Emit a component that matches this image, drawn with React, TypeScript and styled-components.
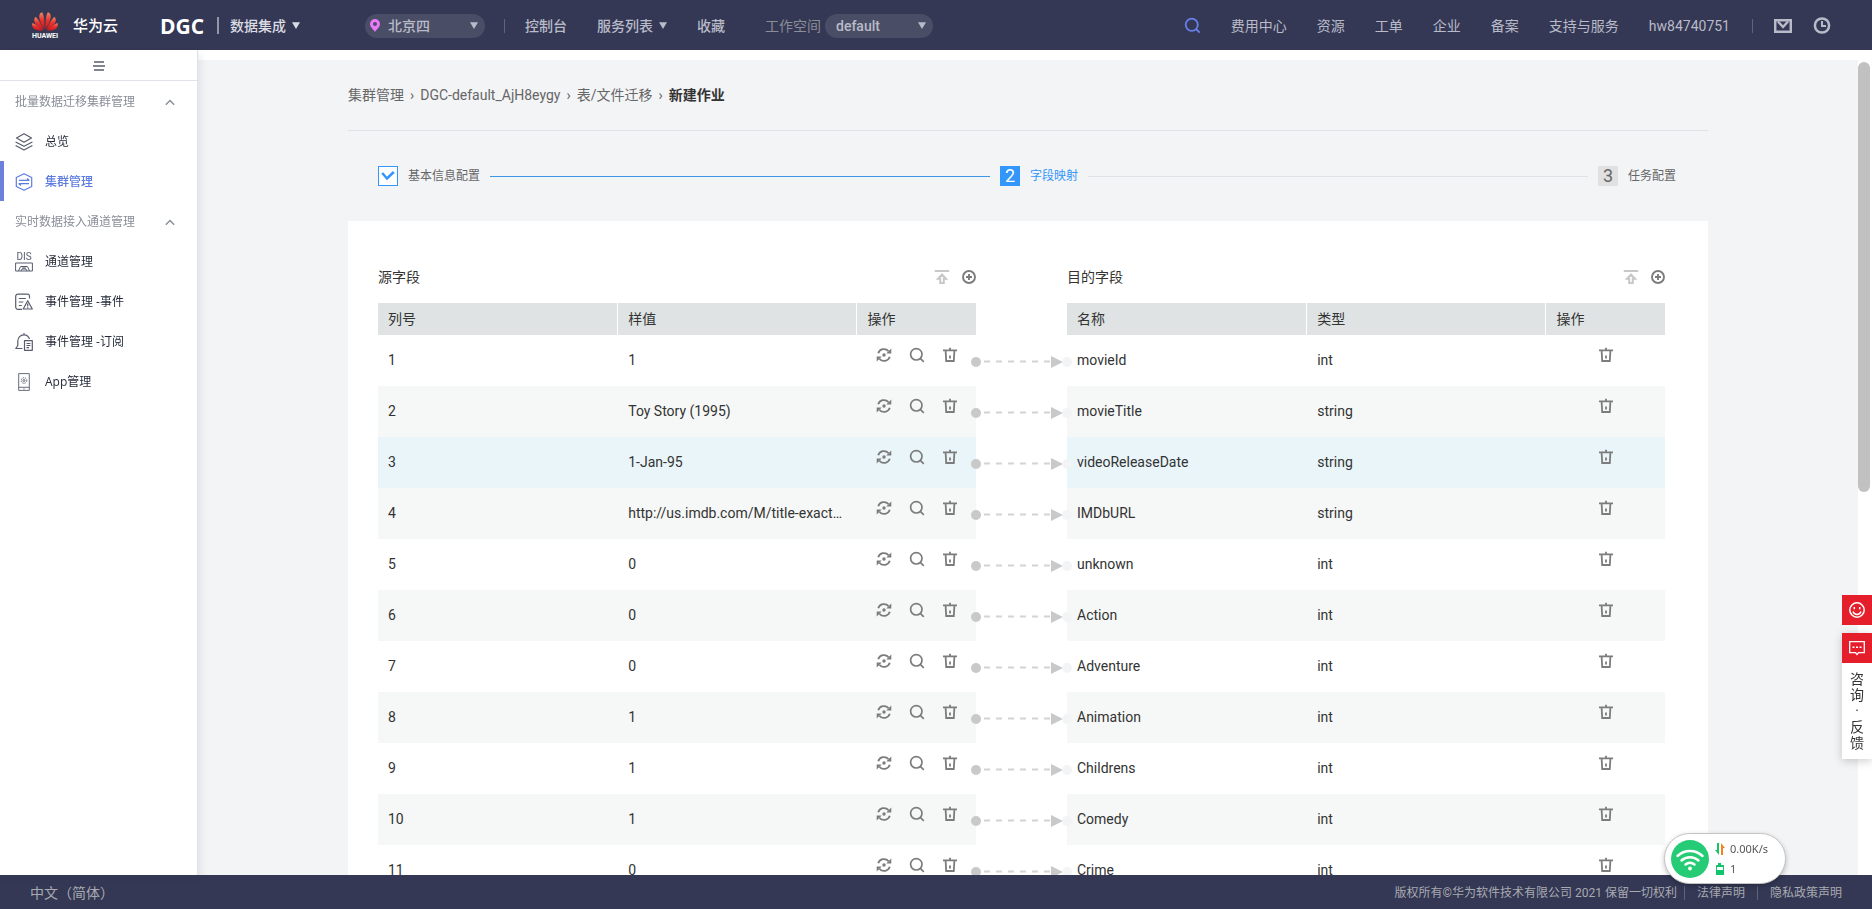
import React from "react";
import styled, { createGlobalStyle, css } from "styled-components";

const GlobalStyle = createGlobalStyle`
  *, *::before, *::after { box-sizing: border-box; }
  html, body { margin: 0; padding: 0; }
  body {
    font-family: Roboto, "Noto Sans CJK SC", sans-serif;
    font-size: 14px;
    line-height: 20px;
    color: #333;
    background: #fff;
  }
  button, select { font: inherit; color: inherit; }
  button { border: 0; padding: 0; background: none; cursor: pointer; }
  a { color: inherit; text-decoration: none; }
  svg { display: block; }
`;

const Page = styled.div`
  height: 100vh;
  display: flex;
  flex-direction: column;
  overflow: hidden;
`;

/* ---------- header ---------- */

const Header = styled.header`
  flex: none;
  height: 50px;
  padding: 1px 41px 0 32px;
  display: flex;
  align-items: center;
  background: #343855;
  color: #b9bbc8;
  white-space: nowrap;
`;

const Logo = styled.a`
  display: flex;
  flex-direction: column;
  align-items: center;
  width: 26px;
  margin-right: 15px;
  color: #fff;
  font-size: 7px;
  font-weight: 700;
  line-height: 8px;
`;

const Brand = styled.a`
  width: 46px;
  margin-right: 41px;
  color: #fff;
  font-size: 15px;
  font-weight: 500;
`;

const Product = styled.strong`
  width: 46px;
  margin-right: 11px;
  color: #fff;
  font-family: "Open Sans", "Noto Sans", sans-serif;
  font-size: 21px;
  font-weight: 700;
`;

const Divider = styled.span<{ $tall?: boolean }>`
  flex: none;
  width: ${(p) => (p.$tall ? 2 : 1)}px;
  height: ${(p) => (p.$tall ? 17 : 14)}px;
  background: ${(p) => (p.$tall ? "#9597a6" : "#5f6279")};
`;

const MenuButton = styled.button<{ $bright?: boolean }>`
  display: flex;
  align-items: center;
  gap: 6px;
  font-weight: 500;
  color: ${(p) => (p.$bright ? "#dcdce3" : "#b9bbc8")};
`;

const ProductMenu = styled(MenuButton)`
  margin: 0 65px 0 11px;
`;

const TopNav = styled.nav`
  display: flex;
  align-items: center;
  gap: 30px;
  margin-left: 20px;
  font-weight: 500;
`;

const Pill = styled.div<{ $width: number; $indent: number }>`
  position: relative;
  width: ${(p) => p.$width}px;
  height: 24px;
  border-radius: 12px;
  background: #4a4d66;
  display: flex;
  align-items: center;

  select {
    appearance: none;
    width: 100%;
    height: 24px;
    padding: 0 20px 0 ${(p) => p.$indent}px;
    border: 0;
    border-radius: 12px;
    background: transparent;
    font-weight: 500;
    outline: 0;
  }
  > svg { position: absolute; pointer-events: none; }
  > svg:last-child { right: 7px; }
  > svg:first-child { left: 5px; }
`;

const HeaderDivider = styled(Divider)`
  margin-left: 19px;
`;

const WorkspaceLabel = styled.label`
  margin-left: 40px;
  margin-right: 4px;
  color: #8c8d96;
`;

const UserNav = styled.nav`
  display: flex;
  align-items: center;
  gap: 30px;
  margin-left: auto;
`;

const Tools = styled.div`
  display: flex;
  align-items: center;
  gap: 21px;
  margin-left: 22px;
`;

/* ---------- body ---------- */

const Body = styled.div`
  flex: 1;
  min-height: 0;
  display: flex;
`;

const Sidebar = styled.aside`
  position: relative;
  z-index: 2;
  flex: none;
  width: 198px;
  background: #fff;
  border-right: 1px solid #dfe1e6;
  box-shadow: 2px 4px 8px rgba(40, 50, 80, 0.1);
  font-family: "Open Sans", "Noto Sans CJK SC", sans-serif;
  font-size: 12px;
`;

const Collapse = styled.button`
  display: flex;
  width: 100%;
  height: 31px;
  padding-top: 2px;
  align-items: center;
  justify-content: center;
  border-bottom: 1px solid #e1e2ee;
`;

const Group = styled.button`
  display: flex;
  width: 100%;
  height: 40px;
  align-items: center;
  justify-content: space-between;
  padding: 2px 22px 0 15px;
  color: #8a8e99;
`;

const Item = styled.a<{ $active?: boolean }>`
  display: flex;
  align-items: center;
  gap: 12px;
  height: 40px;
  padding: 2px 0 0 11px;
  border-left: 4px solid transparent;
  color: #252b3a;
  svg { flex: none; color: #575d6c; }
  ${(p) =>
    p.$active &&
    css`
      border-left-color: #6c80dc;
      color: #5e7ce0;
      font-weight: 500;
      svg { color: #5e7ce0; }
    `}
`;

const Main = styled.main`
  flex: 1;
  min-width: 0;
  display: flex;
  padding-top: 10px;
`;

const Scroller = styled.div`
  flex: 1;
  min-width: 0;
  overflow: auto;
  scrollbar-width: none;
  background: #f3f4f6;
`;

const Rail = styled.div`
  flex: none;
  width: 14px;
  padding: 2px 2px 2px 0;
`;

const Thumb = styled.div`
  height: 53%;
  border-radius: 6px;
  background: #c1c1c1;
`;

const Content = styled.div`
  max-width: 1360px;
  margin: 0 auto;
`;

const Crumbs = styled.nav`
  display: flex;
  align-items: center;
  gap: 6px;
  height: 71px;
  border-bottom: 1px solid #dfe1e4;
  color: #666;
  strong { color: #333; }
`;

const Steps = styled.ol`
  display: flex;
  align-items: center;
  gap: 10px;
  height: 90px;
  margin: 0;
  padding: 0 32px 0 30px;
  list-style: none;
  font-size: 12px;
`;

const Step = styled.li<{ $current?: boolean }>`
  display: flex;
  align-items: center;
  gap: 10px;
  color: ${(p) => (p.$current ? "#3296fa" : "#666")};
`;

const StepBox = styled.span<{ $kind: "done" | "current" | "todo" }>`
  display: flex;
  align-items: center;
  justify-content: center;
  width: 20px;
  height: 20px;
  font-size: 18px;
  ${(p) =>
    p.$kind === "done"
      ? "border: 1px solid #3296fa; background: #fff;"
      : p.$kind === "current"
        ? "background: #3296fa; color: #fff;"
        : "background: #e1e1e1; color: #666;"}
`;

const StepLine = styled.li<{ $done?: boolean }>`
  flex: 1;
  height: 1px;
  background: ${(p) => (p.$done ? "#3c96e6" : "#dfe1e4")};
`;

const Card = styled.section`
  display: flex;
  padding: 46px 43px 40px 30px;
  background: #fff;
`;

const Panel = styled.div`
  flex: 1;
  min-width: 0;
`;

const PanelHead = styled.div`
  display: flex;
  align-items: center;
  justify-content: space-between;
  height: 20px;
  margin-bottom: 16px;
  h2 { margin: 0; font-size: 14px; font-weight: 400; }
  div { display: flex; gap: 12px; }
`;

const Table = styled.table`
  width: 100%;
  table-layout: fixed;
  border-collapse: separate;
  border-spacing: 0;
  th {
    height: 32px;
    padding: 0 10px;
    background: #dfe3e4;
    font-weight: 400;
    text-align: left;
  }
  th + th { border-left: 1px solid #fff; }
  th:last-child { width: 20%; }
`;

const Row = styled.tr<{ $tone: string }>`
  background: ${(p) => p.$tone};
  td {
    height: 51px;
    padding: 0 10px 2px;
    overflow: hidden;
    text-overflow: ellipsis;
    white-space: nowrap;
  }
  td + td { padding-left: 11px; }
`;

const Actions = styled.div`
  display: flex;
  justify-content: center;
  gap: 17px;
  padding-bottom: 10px;
`;

const IconButton = styled.button`
  display: flex;
  color: #7c7c7c;
  &:disabled { color: #c8c8c8; }
`;

const SearchButton = styled(IconButton)`
  color: #6580e8;
`;

const Links = styled.div`
  position: relative;
  z-index: 1;
  flex: none;
  width: 91px;
  padding-top: 68px;
  svg { overflow: visible; }
`;

/* ---------- footer and floating widgets ---------- */

const Footer = styled.footer`
  flex: none;
  display: flex;
  align-items: center;
  justify-content: space-between;
  height: 34px;
  padding: 1px 30px 0;
  background: #343855;
  color: #a9aab0;
`;

const Legal = styled.div`
  display: flex;
  align-items: center;
  gap: 12px;
  font-size: 12px;
  span:first-child { margin-right: -5px; }
`;

const Feedback = styled.div`
  position: fixed;
  z-index: 3;
  right: 0;
  bottom: 150px;
  width: 30px;
  display: flex;
  flex-direction: column;
  gap: 8px;
`;

const RedButton = styled.button`
  display: flex;
  width: 30px;
  height: 30px;
  align-items: center;
  justify-content: center;
  background: #e41f2b;
`;

const FeedbackBox = styled.div`
  background: #fff;
  box-shadow: 0 2px 10px rgba(0, 0, 0, 0.2);
`;

const FeedbackText = styled.a`
  display: block;
  padding: 8px;
  line-height: 16px;
  text-align: center;
  word-break: break-all;
`;

const NetWidget = styled.div`
  position: fixed;
  z-index: 4;
  right: 86px;
  bottom: 25px;
  display: flex;
  align-items: center;
  gap: 6px;
  width: 122px;
  height: 51px;
  padding-left: 6px;
  border: 1px solid #c4c4c4;
  border-radius: 26px;
  background: #fff;
  box-shadow: 0 2px 5px rgba(0, 0, 0, 0.25);
  color: #555;
  font-family: "Noto Sans", sans-serif;
  font-size: 11px;
`;

const NetLine = styled.div`
  display: flex;
  align-items: center;
  gap: 5px;
`;

/* ---------- icons ---------- */

const Caret = () => (
  <svg width="8" height="7" viewBox="0 0 8 7" fill="currentColor"><path d="M0 .3h8L4 7z" /></svg>
);

const Petals = () => (
  <svg width="26" height="20" viewBox="0 0 26 20">
    <defs>
      <linearGradient id="petal" x1="0" y1="0" x2="0" y2="1">
        <stop offset="0" stopColor="#f08a68" />
        <stop offset="0.45" stopColor="#e8342c" />
        <stop offset="1" stopColor="#c9171e" />
      </linearGradient>
    </defs>
    <g fill="url(#petal)">
      <path d="M12.5 17.500C12.600 11 12.400 4 10.200.3 7.500 1 6.800 3.500 7.400 6.300c.7 3.700 3 7.800 5.100 11.200z" />
      <path d="M13.500 17.500C13.400 11 13.600 4 15.800.3c2.700.7 3.400 3.200 2.800 6-.7 3.700-3 7.800-5.100 11.200z" />
      <path d="M11.600 18.100C9.700 13.200 7 7.800 3.700 4.800 1.700 6.500 1.700 9 3.200 11.200c2 2.800 5.200 5 8.400 6.900z" />
      <path d="M14.400 18.100C16.300 13.200 19 7.800 22.300 4.800c2 1.700 2 4.200.5 6.400-2 2.800-5.200 5-8.400 6.900z" />
      <path d="M11 18.600C8.300 16 4 12.300.4 11c-.9 2.600.2 5 2.500 6.300 2.300 1.300 5.400 1.500 8.100 1.300z" />
      <path d="M15 18.600C17.700 16 22 12.300 25.600 11c.9 2.600-.2 5-2.500 6.300-2.300 1.300-5.400 1.500-8.100 1.300z" />
    </g>
  </svg>
);

const Stroke = ({ children }: { children: React.ReactNode }) => (
  <svg width="18" height="18" viewBox="0 0 18 18" fill="none" stroke="currentColor" strokeWidth="1.2" strokeLinejoin="round">
    {children}
  </svg>
);

const LayersIcon = () => (
  <Stroke>
    <path d="M9 .8 16.500 5 9 9.200 1.500 5zM.6 9 9 13.300 17.400 9M.6 12.500 9 17l8.400-4.500" />
  </Stroke>
);
const HexIcon = () => (
  <Stroke>
    <path d="M9 .7 16.700 4.500v9L9 17.300 1.300 13.500v-9zM4 7.300h10l-2-1.800M14 10.700H4l2 1.800" />
  </Stroke>
);
const DisIcon = () => (
  <svg width="18" height="20" viewBox="0 0 18 20" fill="none" stroke="currentColor">
    <text x="9" y="8" textAnchor="middle" fontSize="10" fontFamily="Roboto" fill="currentColor" stroke="none">DIS</text>
    <path d="M.6 11h16.800v8H.6zM3.500 19l2-4.500h7l2 4.500M6 19l1-2h4l1 2M8 14.500v2.500M10 14.500v2.500" />
  </svg>
);
const EventIcon = () => (
  <Stroke>
    <path d="M7 16.400H3A2.300 2.300 0 0 1 .7 14V3A2.300 2.300 0 0 1 3 1.200h9.500A2 2 0 0 1 14.500 3v2.500M3.800 5.500h7M3.800 9h4.500M3.800 12.500h3M12.700 7.700 17.300 16H8.200zM12.700 10.500v3M12.700 14.200v1" />
  </Stroke>
);
const BellIcon = () => (
  <Stroke>
    <path d="M7.500 15.500H.8l2-3V8A6 6 0 0 1 9 1.800 6 6 0 0 1 14.500 6M9 0v2M9.500 7.700h7.800v9.600H9.500zM11.500 10.500h4M11.500 12.500h4M11.500 14.700h2.500" />
  </Stroke>
);
const PhoneIcon = () => (
  <svg width="18" height="18" viewBox="0 0 18 18" fill="none" stroke="currentColor" strokeWidth=".9">
    <path d="M3.700.6h10.600v16.800H3.700zM3.700 14.300h10.600M8.400 16h1.200" />
    <circle cx="9" cy="7.500" r="2.800" strokeDasharray="1.500 .8" />
    <circle cx="9" cy="7.500" r="1" />
  </svg>
);
const ChevronUp = () => (
  <svg width="10" height="7" viewBox="0 0 10 7" fill="none" stroke="#8a8e99" strokeWidth="1.400"><path d="M.8 5.800 5 1.400l4.200 4.400" /></svg>
);
const RefreshIcon = () => (
  <svg width="16" height="16" viewBox="0 0 16 16" fill="none" stroke="currentColor" strokeWidth="1.800">
    <path d="M2.200 6.200A6 6 0 0 1 12.500 4.200M13.800 9.800A6 6 0 0 1 3.500 11.800" />
    <path d="M15.300 1.500v5h-5zM.7 14.500v-5h5z" fill="currentColor" stroke="none" />
    <circle cx="8" cy="8" r="1.700" fill="currentColor" stroke="none" />
  </svg>
);
const SearchIcon = ({ size = 16 }: { size?: number }) => (
  <svg width={size} height={size} viewBox="0 0 16 16" fill="none" stroke="currentColor" strokeWidth="1.700">
    <circle cx="7.300" cy="7.300" r="5.700" /><path d="m11.300 11.300 3.500 3.500" />
  </svg>
);
const TrashIcon = () => (
  <svg width="16" height="16" viewBox="0 0 16 16" fill="none" stroke="currentColor" strokeWidth="1.800">
    <path d="M1 3.300h14M3.600 3.500l.6 10.500h7.600l.6-10.500M8 .8v2.700" /><path d="M8 8.500v3" />
  </svg>
);
const TopIcon = () => (
  <svg width="16" height="16" viewBox="0 0 16 16" fill="none" stroke="currentColor" strokeWidth="2">
    <path d="M.8 2h14.400M8 5.500l4 4.200H9.800v4.300H6.200V9.700H4z" />
  </svg>
);
const PlusIcon = () => (
  <svg width="14" height="16" viewBox="0 0 14 16" fill="none" stroke="currentColor" strokeWidth="1.900">
    <circle cx="7" cy="8" r="6" /><path d="M7 5v6M4 8h6" />
  </svg>
);

/* ---------- data ---------- */

const fields = [
  ["1", "movieId", "int"],
  ["Toy Story (1995)", "movieTitle", "string"],
  ["1-Jan-95", "videoReleaseDate", "string"],
  ["http://us.imdb.com/M/title-exact?Toy%20Story%20(1995)", "IMDbURL", "string"],
  ["0", "unknown", "int"],
  ["0", "Action", "int"],
  ["0", "Adventure", "int"],
  ["1", "Animation", "int"],
  ["1", "Childrens", "int"],
  ["1", "Comedy", "int"],
  ["0", "Crime", "int"],
];
const hoveredRow = 2;
const rowTone = (i: number) => (i === hoveredRow ? "#e9f5f9" : i % 2 ? "#f6f8f7" : "#fff");

const userLinks = ["费用中心", "资源", "工单", "企业", "备案", "支持与服务", "hw84740751"];

const PanelTitle = ({ text }: { text: string }) => (
  <PanelHead>
    <h2>{text}</h2>
    <div>
      <IconButton disabled aria-label="置顶"><TopIcon /></IconButton>
      <IconButton aria-label="添加"><PlusIcon /></IconButton>
    </div>
  </PanelHead>
);

export default function App() {
  return (
    <Page>
      <GlobalStyle />
      <Header>
        <Logo href="#"><Petals />HUAWEI</Logo>
        <Brand href="#">华为云</Brand>
        <Product>DGC</Product>
        <Divider $tall />
        <ProductMenu $bright>数据集成<Caret /></ProductMenu>
        <Pill $width={120} $indent={23}>
          <svg width="10" height="13" viewBox="0 0 10 13"><path fill="#e879f9" fillRule="evenodd" d="M5 0a5 5 0 0 1 5 5c0 3-3.500 5.500-5 8C3.500 10.500 0 8 0 5a5 5 0 0 1 5-5zm0 3a2 2 0 1 0 0 4 2 2 0 0 0 0-4z" /></svg>
          <select aria-label="区域"><option>北京四</option></select>
          <Caret />
        </Pill>
        <HeaderDivider />
        <TopNav>
          <a href="#">控制台</a>
          <MenuButton>服务列表<Caret /></MenuButton>
          <a href="#">收藏</a>
        </TopNav>
        <WorkspaceLabel htmlFor="workspace">工作空间</WorkspaceLabel>
        <Pill $width={108} $indent={11}>
          <select id="workspace"><option>default</option></select>
          <Caret />
        </Pill>
        <UserNav>
          <SearchButton aria-label="搜索"><SearchIcon size={17} /></SearchButton>
          {userLinks.map((t) => <a href="#" key={t}>{t}</a>)}
        </UserNav>
        <Tools>
          <Divider />
          <MenuButton aria-label="消息">
            <svg width="18" height="14" viewBox="0 0 18 14" fill="none" stroke="currentColor" strokeWidth="2.500"><path d="M1.200 1.200h15.600v11.600H1.200z" /><path d="M4 2.500 9 8l5-5.500" /></svg>
          </MenuButton>
          <MenuButton aria-label="历史">
            <svg width="18" height="17" viewBox="0 0 18 17" fill="none" stroke="currentColor" strokeWidth="2.500"><circle cx="9" cy="8.500" r="7.100" /><path d="M9 4v5h4" strokeWidth="2" /></svg>
          </MenuButton>
        </Tools>
      </Header>

      <Body>
        <Sidebar>
          <Collapse aria-label="收起菜单">
            <svg width="12" height="10" viewBox="0 0 12 10" stroke="#575d6c" fill="none"><path d="M1 1h10M0 5h12M1 9h10" strokeWidth="1.300" /></svg>
          </Collapse>
          <Group>批量数据迁移集群管理<ChevronUp /></Group>
          <Item href="#"><LayersIcon />总览</Item>
          <Item href="#" $active><HexIcon />集群管理</Item>
          <Group>实时数据接入通道管理<ChevronUp /></Group>
          <Item href="#"><DisIcon />通道管理</Item>
          <Item href="#"><EventIcon />事件管理 -事件</Item>
          <Item href="#"><BellIcon />事件管理 -订阅</Item>
          <Item href="#"><PhoneIcon />App管理</Item>
        </Sidebar>

        <Main>
          <Scroller>
            <Content>
              <Crumbs>
                <a href="#">集群管理</a><span>›</span>
                <a href="#">DGC-default_AjH8eygy</a><span>›</span>
                <a href="#">表/文件迁移</a><span>›</span>
                <strong>新建作业</strong>
              </Crumbs>
              <Steps>
                <Step>
                  <StepBox $kind="done">
                    <svg width="14" height="10" viewBox="0 0 14 10" fill="none" stroke="#3296fa" strokeWidth="2.500"><path d="M1.200 2 6 7.500 12.800 1" /></svg>
                  </StepBox>
                  基本信息配置
                </Step>
                <StepLine $done />
                <Step $current><StepBox $kind="current">2</StepBox>字段映射</Step>
                <StepLine />
                <Step><StepBox $kind="todo">3</StepBox>任务配置</Step>
              </Steps>

              <Card>
                <Panel>
                  <PanelTitle text="源字段" />
                  <Table>
                    <thead><tr><th>列号</th><th>样值</th><th>操作</th></tr></thead>
                    <tbody>
                      {fields.map(([sample], i) => (
                        <Row key={i} $tone={rowTone(i)}>
                          <td>{i + 1}</td>
                          <td>{sample}</td>
                          <td>
                            <Actions>
                              <IconButton aria-label="转换"><RefreshIcon /></IconButton>
                              <IconButton aria-label="查看"><SearchIcon /></IconButton>
                              <IconButton aria-label="删除"><TrashIcon /></IconButton>
                            </Actions>
                          </td>
                        </Row>
                      ))}
                    </tbody>
                  </Table>
                </Panel>
                <Links>
                  {fields.map(([, name]) => (
                    <svg key={name} width="91" height="51" viewBox="0 0 91 51">
                      <circle cx="0" cy="27" r="5" fill="#c9c9c9" />
                      <path d="M8 26.500h67" stroke="#d3d3d3" strokeWidth="2" strokeDasharray="6 6" />
                      <path d="M75 21v12l12-6z" fill="#c9c9c9" />
                      <circle cx="91" cy="27" r="5" fill="#f3f4f6" />
                    </svg>
                  ))}
                </Links>
                <Panel>
                  <PanelTitle text="目的字段" />
                  <Table>
                    <thead><tr><th>名称</th><th>类型</th><th>操作</th></tr></thead>
                    <tbody>
                      {fields.map(([, name, type], i) => (
                        <Row key={name} $tone={rowTone(i)}>
                          <td>{name}</td>
                          <td>{type}</td>
                          <td><Actions><IconButton aria-label="删除"><TrashIcon /></IconButton></Actions></td>
                        </Row>
                      ))}
                    </tbody>
                  </Table>
                </Panel>
              </Card>
            </Content>
          </Scroller>
          <Rail><Thumb /></Rail>
        </Main>
      </Body>

      <Footer>
        <a href="#">中文（简体）</a>
        <Legal>
          <span>版权所有©华为软件技术有限公司 2021 保留一切权利</span>
          <Divider />
          <a href="#">法律声明</a>
          <Divider />
          <a href="#">隐私政策声明</a>
        </Legal>
      </Footer>

      <Feedback>
        <RedButton aria-label="评价">
          <svg width="16" height="16" viewBox="0 0 16 16" fill="none" stroke="#fff" strokeWidth="1.500">
            <circle cx="8" cy="8" r="7.200" /><path d="M4 9.500a4.200 4.200 0 0 0 8 0M5.300 5v2.300M10.700 5v2.300" />
          </svg>
        </RedButton>
        <FeedbackBox>
          <RedButton aria-label="咨询">
            <svg width="16" height="15" viewBox="0 0 16 15" fill="none" stroke="#fff" strokeWidth="1.300">
              <path d="M.7.700h14.600v11H9.500L8 13.500l-1.500-1.800H.7z" /><path d="M3.500 6.300h2M7 6.300h2M10.500 6.300h2" strokeWidth="1.600" />
            </svg>
          </RedButton>
          <FeedbackText href="#">咨询·反馈</FeedbackText>
        </FeedbackBox>
      </Feedback>

      <NetWidget>
        <svg width="38" height="38" viewBox="0 0 38 38" fill="none" stroke="#fff" strokeWidth="2.500" strokeLinecap="round">
          <circle cx="19" cy="19" r="19" fill="#26cc75" stroke="none" />
          <path d="M6.500 16a18 18 0 0 1 25 0M10.500 20.500a12.500 12.500 0 0 1 17 0M14.500 24.500a7 7 0 0 1 9 0" />
          <circle cx="19" cy="28.500" r="1.900" fill="#fff" stroke="none" />
        </svg>
        <div>
          <NetLine>
            <svg width="10" height="12" viewBox="0 0 10 12"><path fill="#12c46b" d="M4 0v12L0 7h2V0z" /><path fill="#f58220" d="M6 12V0l4 5H8v7z" /></svg>
            0.00K/s
          </NetLine>
          <NetLine>
            <svg width="10" height="12" viewBox="0 0 10 12"><path fill="#12c46b" fillRule="evenodd" d="M3 0h3v2h3v10H1V2h2zM2 4v3h6V4z" /></svg>
            1
          </NetLine>
        </div>
      </NetWidget>
    </Page>
  );
}
